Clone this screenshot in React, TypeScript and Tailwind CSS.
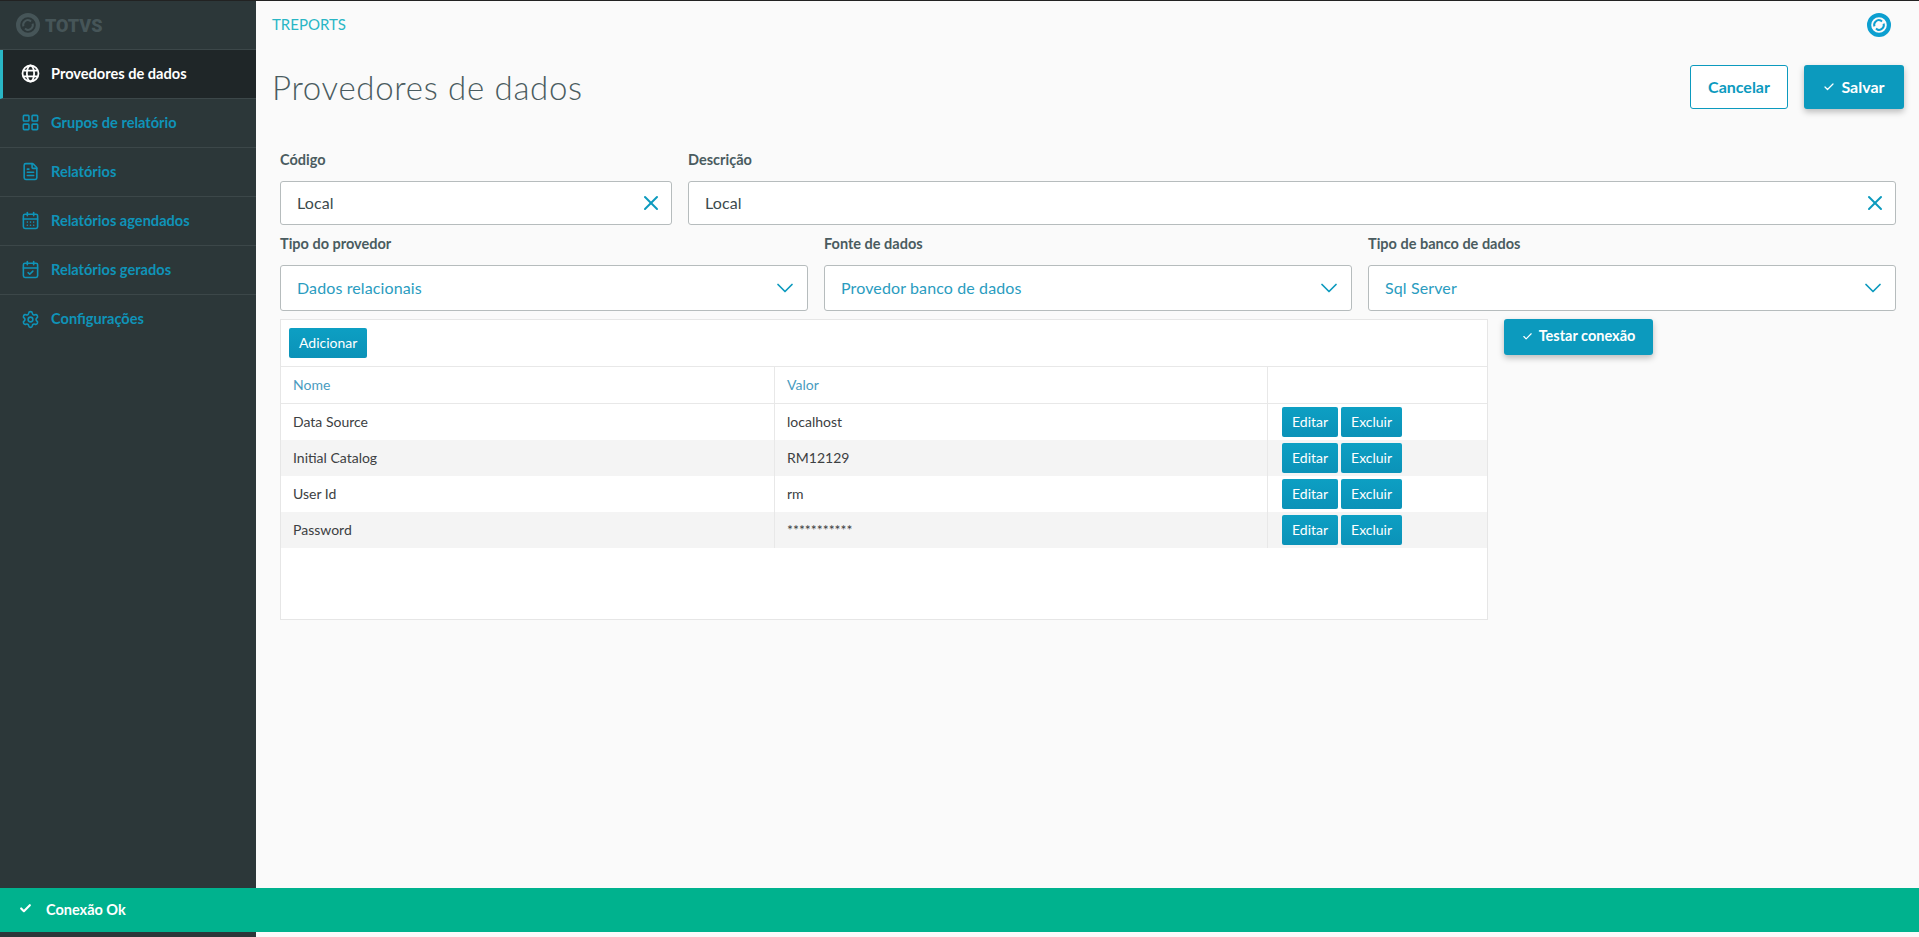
import { CalendarCheck, CalendarDays, Check, ChevronDown, FileText, LayoutGrid, Settings, X } from "lucide-react";

const font = "font-['Lato','Noto_Sans',sans-serif]";

const GlobeIcon = ({ size, className }: { size: number; strokeWidth?: number; className?: string }) => (
  <svg width={size} height={size} viewBox="0 0 20 20" fill="none" stroke="currentColor" strokeWidth="1.9" className={className}>
    <circle cx="10" cy="10" r="8.4" />
    <ellipse cx="10" cy="10" rx="3.8" ry="8.4" />
    <path d="M2.4 7 H17.6 M2.4 13 H17.6" />
  </svg>
);

const menu = [
  { label: "Provedores de dados", icon: GlobeIcon, active: true },
  { label: "Grupos de relatório", icon: LayoutGrid },
  { label: "Relatórios", icon: FileText },
  { label: "Relatórios agendados", icon: CalendarDays },
  { label: "Relatórios gerados", icon: CalendarCheck },
  { label: "Configurações", icon: Settings },
];

const rows = [
  { name: "Data Source", value: "localhost" },
  { name: "Initial Catalog", value: "RM12129" },
  { name: "User Id", value: "rm" },
  { name: "Password", value: "***********" },
];

// outer ring plus two broken inner arcs
const TotvsMark = ({ size, className }: { size: number; className: string }) => (
  <svg width={size} height={size} viewBox="0 0 24 24" fill="none" stroke="currentColor" className={className}>
    <circle cx="12" cy="12" r="9.9" strokeWidth="4.2" />
    <path d="M7.4 13.4 A4.8 4.8 0 0 1 13.8 7.5 L15 8.6 M16.6 10.6 A4.8 4.8 0 0 1 10.2 16.5 L9 15.4" strokeWidth="2" />
  </svg>
);

const Field = ({ label, value, select }: { label: string; value: string; select?: boolean }) => (
  <div>
    <label className="mb-[11px] block h-5 text-[14.5px] leading-5 font-bold text-[#4a5c60]">{label}</label>
    <div
      className={`flex items-center justify-between rounded-[3px] border border-[#b6bcbd] bg-white pl-[16px] pr-[8px] text-[16px] tracking-[0.12px] ${
        select ? "h-[46px] text-[#2a9cc0]" : "h-[44px] text-[#3c4a4d]"
      }`}
    >
      <span>{value}</span>
      {select ? (
        <ChevronDown size={28} strokeWidth={1.5} className="text-[#0c9abe]" />
      ) : (
        <X size={24} strokeWidth={2} className="text-[#0c9abe]" />
      )}
    </div>
  </div>
);

const SmallButton = ({ children }: { children: string }) => (
  <button className="h-[30px] rounded-[2px] bg-linear-to-b from-[#0d9fc3] to-[#0b92b8] px-[10px] pb-[2px] text-[14px] text-white">
    {children}
  </button>
);

export default function App() {
  return (
    <div className={`relative flex h-screen overflow-hidden border-t border-[#222] bg-[#fafafa] ${font}`}>
      <aside className="w-[256px] shrink-0 bg-[#2c3739]">
        <div className="flex h-[49px] items-center gap-[5px] border-b border-[#3c4749] pl-[16px] text-[#465558]">
          <TotvsMark size={24} className="" />
          <span className="font-['Roboto',sans-serif] text-[18px] font-black">TOTVS</span>
        </div>
        {menu.map((item, i) => (
          <div
            key={item.label}
            className={`flex h-[49px] items-center pb-[1px] text-[14.6px] font-bold ${
              i < menu.length - 1 ? "border-b border-[#3c4749]" : ""
            } ${
              item.active
                ? "border-l-[3px] border-l-[#29b6c5] bg-[#1f2628] pl-[18px] text-white"
                : "pl-[21px] text-[#0f93b8]"
            }`}
          >
            <item.icon size={19} strokeWidth={2} className="mr-[11px]" />
            <span>{item.label}</span>
          </div>
        ))}
      </aside>

      <main className="flex min-w-0 flex-1 flex-col">
        <div className="flex h-[47px] items-center justify-between pl-[16px] pr-[28px]">
          <span className="text-[15px] text-[#29b6c5]">TREPORTS</span>
          <TotvsMark size={24} className="text-[#0c9fd0]" />
        </div>

        <div className="flex items-center justify-between pl-[16px] pr-[15px] pt-[17px]">
          <h1 className="text-[33px] leading-[44px] font-light tracking-[0.7px] text-[#4a5c60]">Provedores de dados</h1>
          <div className="flex gap-4">
            <button className="h-[44px] w-[98px] rounded-[3px] border border-[#0c9abe] bg-white text-[16px] font-bold text-[#0c9abe]">
              Cancelar
            </button>
            <button className="flex h-[44px] w-[100px] items-center justify-center gap-[6px] rounded-[3px] bg-[#0c9abe] text-[16px] font-bold text-white shadow-[0_3px_6px_rgba(0,0,0,0.25)]">
              <Check size={12} strokeWidth={2.5} />
              Salvar
            </button>
          </div>
        </div>

        <div className="mt-[41px] ml-[24px] mr-[23px] flex flex-col">
          <div className="grid grid-cols-[392px_1fr] gap-4">
            <Field label="Código" value="Local" />
            <Field label="Descrição" value="Local" />
          </div>
          <div className="mt-[9px] grid grid-cols-3 gap-4">
            <Field label="Tipo do provedor" value="Dados relacionais" select />
            <Field label="Fonte de dados" value="Provedor banco de dados" select />
            <Field label="Tipo de banco de dados" value="Sql Server" select />
          </div>

          <div className="mt-[8px] flex items-start gap-4">
            <div className="h-[301px] w-[1208px] border border-[#e6e6e6] bg-white">
              <div className="h-[47px] border-b border-[#e8e8e8] pl-[8px] pt-[8px]">
                <SmallButton>Adicionar</SmallButton>
              </div>
              <table className="w-full table-fixed border-separate border-spacing-0 text-[14px] text-[#3c4042]">
                <thead>
                  <tr>
                    <th className="h-[37px] w-[494px] border-r border-b border-[#e8e8e8] pb-[2px] pl-[12px] text-left font-normal text-[#4a9cc0]">Nome</th>
                    <th className="w-[493px] border-r border-b border-[#e8e8e8] pb-[2px] pl-[12px] text-left font-normal text-[#4a9cc0]">Valor</th>
                    <th className="border-b border-[#e8e8e8]"></th>
                  </tr>
                </thead>
                <tbody>
                  {rows.map((row, i) => (
                    <tr key={row.name} className={i % 2 === 1 ? "bg-[#f4f4f4]" : ""}>
                      <td className="h-[36px] border-r border-[#e8e8e8] pb-[2px] pl-[12px]">{row.name}</td>
                      <td className="border-r border-[#e8e8e8] pb-[2px] pl-[12px]">{row.value}</td>
                      <td className="pl-[14px]">
                        <div className="flex gap-[3px]">
                          <SmallButton>Editar</SmallButton>
                          <SmallButton>Excluir</SmallButton>
                        </div>
                      </td>
                    </tr>
                  ))}
                </tbody>
              </table>
            </div>
            <button className="flex h-[36px] w-[149px] items-center justify-center gap-[6px] rounded-[3px] bg-[#0c9abe] pb-[2px] text-[14.5px] font-bold text-white shadow-[0_3px_6px_rgba(0,0,0,0.25)]">
              <Check size={11} strokeWidth={2.5} />
              Testar conexão
            </button>
          </div>
        </div>
      </main>

      <div className="absolute inset-x-0 bottom-[5px] flex h-[44px] items-center bg-[#00b28e] pl-[19px] text-[14.5px] font-bold text-white">
        <Check size={13} strokeWidth={4} className="mr-[14px] mb-[3px]" />
        Conexão Ok
      </div>
    </div>
  );
}
